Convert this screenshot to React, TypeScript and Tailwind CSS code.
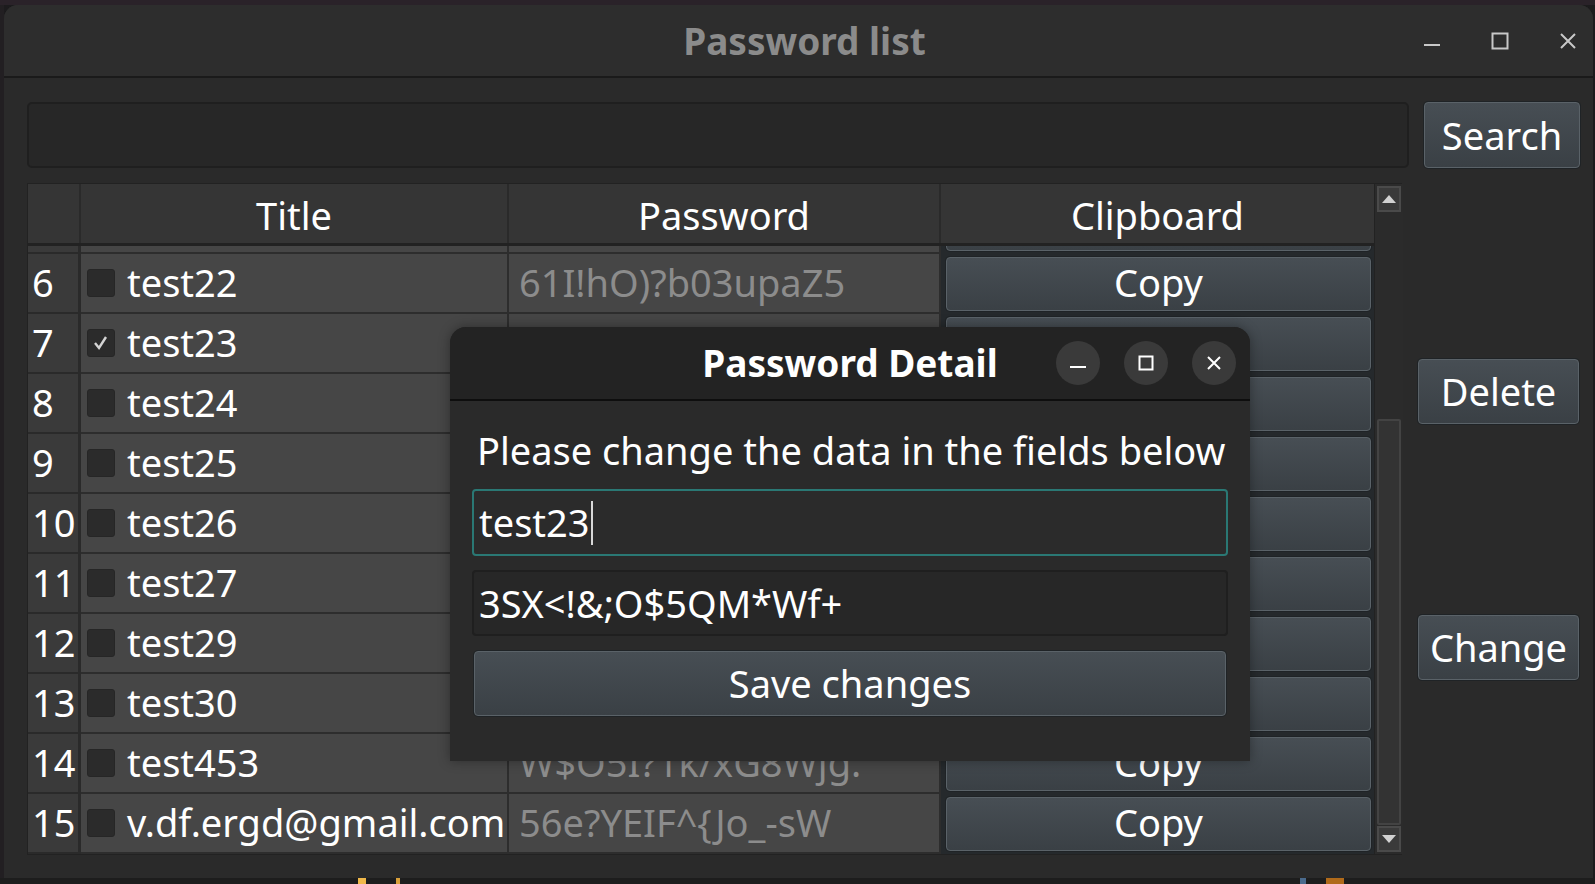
import React from 'react';

type Entry = { id: number; title: string; password: string; checked?: boolean };

const ENTRIES: Entry[] = [
    { id: 5, title: 'test21', password: 'aP0!x9Lq#m2Zt' },
    { id: 6, title: 'test22', password: '61I!hO)?b03upaZ5' },
    { id: 7, title: 'test23', password: '3SX<!&;O$5QM*Wf+', checked: true },
    { id: 8, title: 'test24', password: 'k8#Lm2?pQz1!xR' },
    { id: 9, title: 'test25', password: 'Zq7$uT0@wE3nB' },
    { id: 10, title: 'test26', password: 'r4^Yv9&cH1sJ' },
    { id: 11, title: 'test27', password: 'N2!pX8*fG5oL' },
    { id: 12, title: 'test29', password: 'b6%Dk3(qM0tW' },
    { id: 13, title: 'test30', password: 'Ty9?eR4!jU7i' },
    { id: 14, title: 'test453', password: 'W$O5I?1k/xG8Wjg.' },
    { id: 15, title: 'v.df.ergd@gmail.com', password: '56e?YEIF^{Jo_-sW' },
];

const FONT = { fontFamily: '"Noto Sans", "Open Sans", sans-serif' };

const btn =
    'flex items-center justify-center rounded-[4px] border border-[#5a6268] bg-gradient-to-b from-[#474e54] to-[#3a4045] text-white shadow-[0_0_0_1px_#1f2326]';

const Checkbox: React.FC<{ checked?: boolean }> = ({ checked }) => (
    <div className="w-[28px] h-[28px] shrink-0 rounded-[3px] bg-[#2b2b2b] border border-[#262626] flex items-center justify-center">
        {checked && (
            <svg width="18" height="18" viewBox="0 0 18 18">
                <polyline points="3,9 7,14 14,3" fill="none" stroke="#d4d4d4" strokeWidth="2.4" />
            </svg>
        )}
    </div>
);

const Row: React.FC<{ entry: Entry }> = ({ entry }) => (
    <div className="flex h-[60px] shrink-0 text-[38px] leading-none">
        <div className="w-[53px] shrink-0 bg-[#3a3a3a] border-r-[3px] border-b-2 border-[#2a2a2a] flex items-center pl-[4px] pb-[3px] text-white">
            {entry.id}
        </div>
        <div className="w-[428px] shrink-0 bg-[#464646] border-r-2 border-b-2 border-[#2d2d2d] flex items-center gap-[12px] pl-[6px] text-white whitespace-nowrap overflow-hidden">
            <Checkbox checked={entry.checked} />
            <span className="pb-[3px]">{entry.title}</span>
        </div>
        <div className="w-[432px] shrink-0 bg-[#464646] border-r-2 border-b-2 border-[#2d2d2d] flex items-center pl-[10px] pb-[3px] text-[#8c8c8c] whitespace-nowrap overflow-hidden">
            {entry.password}
        </div>
        <div className="w-[433px] shrink-0 bg-[#25292c] pl-[5px] pr-[3px] py-[3px] flex">
            <div className={`${btn} flex-1 h-full pb-[4px]`}>Copy</div>
        </div>
    </div>
);

const Triangle: React.FC<{ down?: boolean }> = ({ down }) => (
    <svg width="14" height="9" viewBox="0 0 14 9">
        <polygon points={down ? '0,0 14,0 7,8' : '0,8 14,8 7,0'} fill="#d2d2d2" />
    </svg>
);

const App: React.FC = () => {
    return (
        <div className="w-[1595px] h-[884px] overflow-hidden bg-[#1c1b1d] flex flex-col" style={FONT}>
            <div className="h-[5px] shrink-0 bg-[#2a2229]" />
            <div className="flex flex-1 min-h-0">
                <div className="w-[4px] shrink-0 bg-[#221f22]" />

                {/* Main window */}
                <div className="relative w-[1589px] h-[873px] shrink-0 rounded-t-[14px] bg-[#2a2a2a] flex flex-col overflow-hidden">
                    {/* Title bar */}
                    <div className="h-[73px] shrink-0 bg-[#2d2d2d] border-b-2 border-[#1a1a1a] grid grid-cols-[1fr_auto_1fr] items-center">
                        <div />
                        <div className="text-[37px] font-bold text-[#8b8b8b] pl-[12px]">Password list</div>
                        <div className="flex justify-end items-center gap-[24px] pr-[3px]">
                            <div className="w-[44px] h-[44px] flex items-center justify-center">
                                <svg width="18" height="18" viewBox="0 0 18 18">
                                    <line x1="1" y1="13" x2="17" y2="13" stroke="#c8c8c8" strokeWidth="2" />
                                </svg>
                            </div>
                            <div className="w-[44px] h-[44px] flex items-center justify-center">
                                <svg width="18" height="18" viewBox="0 0 18 18">
                                    <rect x="1.5" y="1.5" width="15" height="15" fill="none" stroke="#c8c8c8" strokeWidth="2" />
                                </svg>
                            </div>
                            <div className="w-[44px] h-[44px] flex items-center justify-center">
                                <svg width="18" height="18" viewBox="0 0 18 18">
                                    <path d="M2 2 L16 16 M16 2 L2 16" stroke="#c8c8c8" strokeWidth="2" />
                                </svg>
                            </div>
                        </div>
                    </div>

                    {/* Body */}
                    <div className="flex flex-col pt-[24px] pl-[23px] pr-[13px]">
                        {/* Search row */}
                        <div className="flex h-[66px] gap-[15px]">
                            <div className="flex-1 rounded-[5px] bg-[#272727] border-2 border-[#1f1f1f]" />
                            <div className={`${btn} w-[156px] text-[38px]`}>Search</div>
                        </div>

                        <div className="flex mt-[15px]">
                            {/* Table */}
                            <div className="flex w-[1375px] h-[672px] border border-[#222222] bg-[#2b2b2b]">
                                <div className="flex flex-col w-[1346px]">
                                    <div className="flex h-[62px] shrink-0 bg-[#353535] border-b-[3px] border-[#222222] text-[38px] text-white">
                                        <div className="w-[53px] shrink-0 border-r-2 border-[#2a2a2a]" />
                                        <div className="w-[428px] shrink-0 border-r-2 border-[#2a2a2a] flex items-center justify-center pt-[4px]">Title</div>
                                        <div className="w-[432px] shrink-0 border-r-2 border-[#2a2a2a] flex items-center justify-center pt-[4px]">Password</div>
                                        <div className="w-[433px] shrink-0 flex items-center justify-center pt-[4px]">Clipboard</div>
                                    </div>
                                    <div className="flex-1 overflow-hidden">
                                        <div className="flex flex-col -mt-[52px]">
                                            {ENTRIES.map((e) => (
                                                <Row key={e.id} entry={e} />
                                            ))}
                                        </div>
                                    </div>
                                </div>

                                {/* Scrollbar */}
                                <div className="w-[29px] shrink-0 flex flex-col bg-[#2b2b2b] border-l border-[#222222] p-[2px] gap-[1px]">
                                    <div className="h-[26px] shrink-0 bg-[#3a3a3a] border-2 border-[#4a4a4a] flex items-center justify-center">
                                        <Triangle />
                                    </div>
                                    <div className="flex-1 flex flex-col">
                                        <div className="h-[206px] shrink-0" />
                                        <div className="flex-1 bg-[#333333] border-2 border-[#434343] rounded-[2px]" />
                                    </div>
                                    <div className="h-[26px] shrink-0 bg-[#3a3a3a] border-2 border-[#4a4a4a] flex items-center justify-center">
                                        <Triangle down />
                                    </div>
                                </div>
                            </div>

                            {/* Right actions */}
                            <div className="flex flex-col pl-[16px] pt-[176px] gap-[191px]">
                                <div className={`${btn} w-[161px] h-[65px] text-[38px]`}>Delete</div>
                                <div className={`${btn} w-[161px] h-[65px] text-[38px]`}>Change</div>
                            </div>
                        </div>
                    </div>

                    {/* Password Detail dialog */}
                    <div className="absolute left-[446px] top-[322px] w-[800px] h-[434px] rounded-t-[16px] bg-[#2a2a2a] flex flex-col overflow-hidden shadow-[0_0_12px_rgba(0,0,0,0.35)]">
                        <div className="h-[74px] shrink-0 bg-[#232323] border-b-2 border-[#0e0e0e] grid grid-cols-[1fr_auto_1fr] items-center">
                            <div />
                            <div className="text-[37px] font-bold text-white">Password Detail</div>
                            <div className="flex justify-end items-center gap-[24px] pr-[14px]">
                                <div className="w-[44px] h-[44px] rounded-full bg-[#3a3a3a] flex items-center justify-center">
                                    <svg width="18" height="18" viewBox="0 0 18 18">
                                        <line x1="1" y1="13" x2="17" y2="13" stroke="#ffffff" strokeWidth="2" />
                                    </svg>
                                </div>
                                <div className="w-[44px] h-[44px] rounded-full bg-[#3a3a3a] flex items-center justify-center">
                                    <svg width="16" height="16" viewBox="0 0 16 16">
                                        <rect x="1.5" y="1.5" width="13" height="13" fill="none" stroke="#ffffff" strokeWidth="2" />
                                    </svg>
                                </div>
                                <div className="w-[44px] h-[44px] rounded-full bg-[#3a3a3a] flex items-center justify-center">
                                    <svg width="16" height="16" viewBox="0 0 16 16">
                                        <path d="M2 2 L14 14 M14 2 L2 14" stroke="#ffffff" strokeWidth="2" />
                                    </svg>
                                </div>
                            </div>
                        </div>
                        <div className="flex flex-col px-[22px] pt-[23px] text-[38px] text-white">
                            <div className="h-[52px] leading-[52px] pl-[5px] whitespace-nowrap">Please change the data in the fields below</div>
                            <div className="mt-[13px] h-[67px] rounded-[4px] border-2 border-[#2a7874] bg-[#2b2b2b] flex items-center pl-[5px]">
                                <span>test23</span>
                                <span className="w-[2px] h-[44px] bg-[#d8d8d8] ml-[1px]" />
                            </div>
                            <div className="mt-[14px] h-[66px] rounded-[4px] border-2 border-[#1f1f1f] bg-[#272727] flex items-center pl-[5px]">
                                3SX&lt;!&amp;;O$5QM*Wf+
                            </div>
                            <div className={`${btn} mt-[15px] h-[65px] mx-[2px]`}>Save changes</div>
                        </div>
                    </div>
                </div>
            </div>
            <div className="h-[6px] shrink-0 bg-[#1d1d1d] flex">
                <div className="ml-[358px] w-[8px] bg-[#f0b84a]" />
                <div className="ml-[30px] w-[4px] bg-[#d9a03a]" />
                <div className="ml-[900px] w-[6px] bg-[#4a6a8c]" />
                <div className="ml-[20px] w-[18px] bg-[#b06a1a]" />
            </div>
        </div>
    );
};

export default App;
